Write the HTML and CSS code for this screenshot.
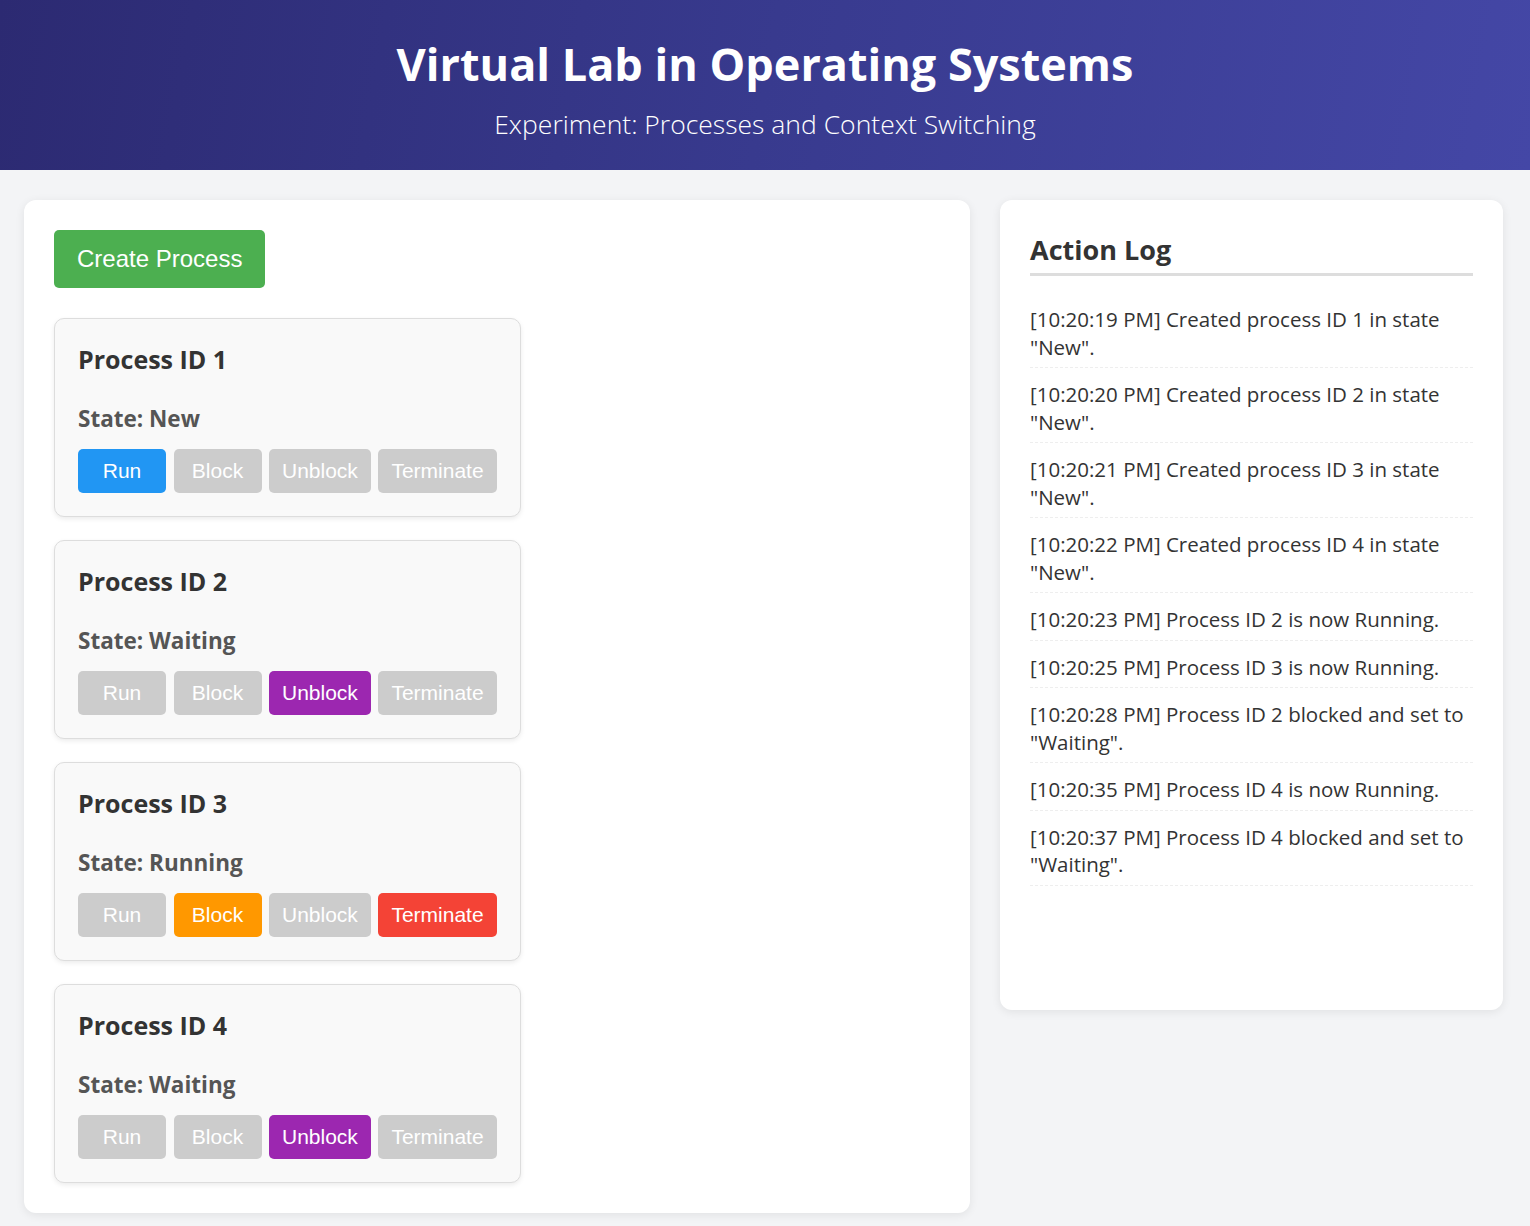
FILE: index.html
```html
<!DOCTYPE html>
<html lang="en">
<head>
<meta charset="utf-8">
<title>Virtual Lab in Operating Systems</title>
<link rel="stylesheet" href="styles.css">
</head>
<body>
<header class="site-header">
  <h1 class="site-title">Virtual Lab in Operating Systems</h1>
  <p class="site-subtitle">Experiment: Processes and Context Switching</p>
</header>
<main class="layout">
  <section class="panel panel-main">
    <button class="btn-create">Create Process</button>
    <div class="process-list">
      <div class="process-card">
        <h3 class="process-title">Process ID 1</h3>
        <p class="process-state">State: New</p>
        <div class="actions">
          <button class="btn btn-run">Run</button>
          <button class="btn btn-off">Block</button>
          <button class="btn btn-off">Unblock</button>
          <button class="btn btn-off">Terminate</button>
        </div>
      </div>
      <div class="process-card">
        <h3 class="process-title">Process ID 2</h3>
        <p class="process-state">State: Waiting</p>
        <div class="actions">
          <button class="btn btn-off">Run</button>
          <button class="btn btn-off">Block</button>
          <button class="btn btn-unblock">Unblock</button>
          <button class="btn btn-off">Terminate</button>
        </div>
      </div>
      <div class="process-card">
        <h3 class="process-title">Process ID 3</h3>
        <p class="process-state">State: Running</p>
        <div class="actions">
          <button class="btn btn-off">Run</button>
          <button class="btn btn-block">Block</button>
          <button class="btn btn-off">Unblock</button>
          <button class="btn btn-terminate">Terminate</button>
        </div>
      </div>
      <div class="process-card">
        <h3 class="process-title">Process ID 4</h3>
        <p class="process-state">State: Waiting</p>
        <div class="actions">
          <button class="btn btn-off">Run</button>
          <button class="btn btn-off">Block</button>
          <button class="btn btn-unblock">Unblock</button>
          <button class="btn btn-off">Terminate</button>
        </div>
      </div>
    </div>
  </section>
  <aside class="panel panel-log">
    <h2 class="log-title">Action Log</h2>
    <ul class="log-list">
      <li class="log-item">[10:20:19 PM] Created process ID 1 in state "New".</li>
      <li class="log-item">[10:20:20 PM] Created process ID 2 in state "New".</li>
      <li class="log-item">[10:20:21 PM] Created process ID 3 in state "New".</li>
      <li class="log-item">[10:20:22 PM] Created process ID 4 in state "New".</li>
      <li class="log-item">[10:20:23 PM] Process ID 2 is now Running.</li>
      <li class="log-item">[10:20:25 PM] Process ID 3 is now Running.</li>
      <li class="log-item">[10:20:28 PM] Process ID 2 blocked and set to "Waiting".</li>
      <li class="log-item">[10:20:35 PM] Process ID 4 is now Running.</li>
      <li class="log-item">[10:20:37 PM] Process ID 4 blocked and set to "Waiting".</li>
    </ul>
  </aside>
</main>
</body>
</html>
```
FILE: styles.css
```css
* { box-sizing: border-box; }

body {
  margin: 0;
  background: #f3f4f6;
  font-family: "Open Sans", "Noto Sans", sans-serif;
  color: #333;
}

.site-header {
  height: 170px;
  background: linear-gradient(100deg, #2c2a72 0%, #383a8e 50%, #4447a6 100%);
  color: #fff;
  text-align: center;
  padding-top: 34px;
}

.site-title {
  margin: 0;
  font-size: 45px;
  line-height: 60px;
  font-weight: 700;
}

.site-subtitle {
  margin: 10px 0 0;
  font-size: 26.5px;
  line-height: 40px;
  font-weight: 300;
}

.layout {
  display: grid;
  grid-template-columns: 946px 503px;
  column-gap: 30px;
  align-items: start;
  padding: 30px 24px 13px;
}

.panel {
  background: #fff;
  border-radius: 12px;
  box-shadow: 0 2px 10px rgba(0, 0, 0, 0.08);
  padding: 30px;
}

.btn-create {
  display: block;
  background: #4caf50;
  color: #fff;
  border: none;
  border-radius: 5px;
  font-family: "Liberation Sans", Arial, sans-serif;
  font-size: 24px;
  line-height: 28px;
  padding: 15px 23px;
  margin-bottom: 30px;
}

.process-list {
  display: flex;
  flex-direction: column;
  align-items: flex-start;
  gap: 23px;
}

.process-card {
  background: #f9f9f9;
  border: 1px solid #ddd;
  border-radius: 10px;
  box-shadow: 0 2px 5px rgba(0, 0, 0, 0.08);
  padding: 24px 23px 23px;
}

.process-title {
  margin: 0 0 30px;
  font-size: 25px;
  line-height: 32px;
  font-weight: 700;
  color: #333;
}

.process-state {
  margin: 0 0 16px;
  font-size: 22.5px;
  line-height: 28px;
  font-weight: 700;
  color: #555;
}

.actions {
  display: flex;
  gap: 7.5px;
}

.btn {
  min-width: 88px;
  height: 44px;
  padding: 0 13px;
  border: none;
  border-radius: 5px;
  color: #fff;
  font-family: "Liberation Sans", Arial, sans-serif;
  font-size: 21px;
}

.btn-off { background: #cccccc; }
.btn-run { background: #2196f3; }
.btn-block { background: #ff9800; }
.btn-unblock { background: #9c27b0; }
.btn-terminate { background: #f44336; }

.log-title {
  margin: 0 0 24px;
  padding-bottom: 3px;
  border-bottom: 3px solid #ddd;
  font-size: 27px;
  line-height: 40px;
  font-weight: 700;
  color: #333;
}

.log-list {
  list-style: none;
  margin: 0;
  padding: 0;
  min-height: 680px;
}

.log-item {
  font-size: 20.5px;
  line-height: 27.5px;
  padding: 6px 0 6px;
  margin-bottom: 7px;
  border-bottom: 1px dashed #eee;
  color: #333;
}
```
